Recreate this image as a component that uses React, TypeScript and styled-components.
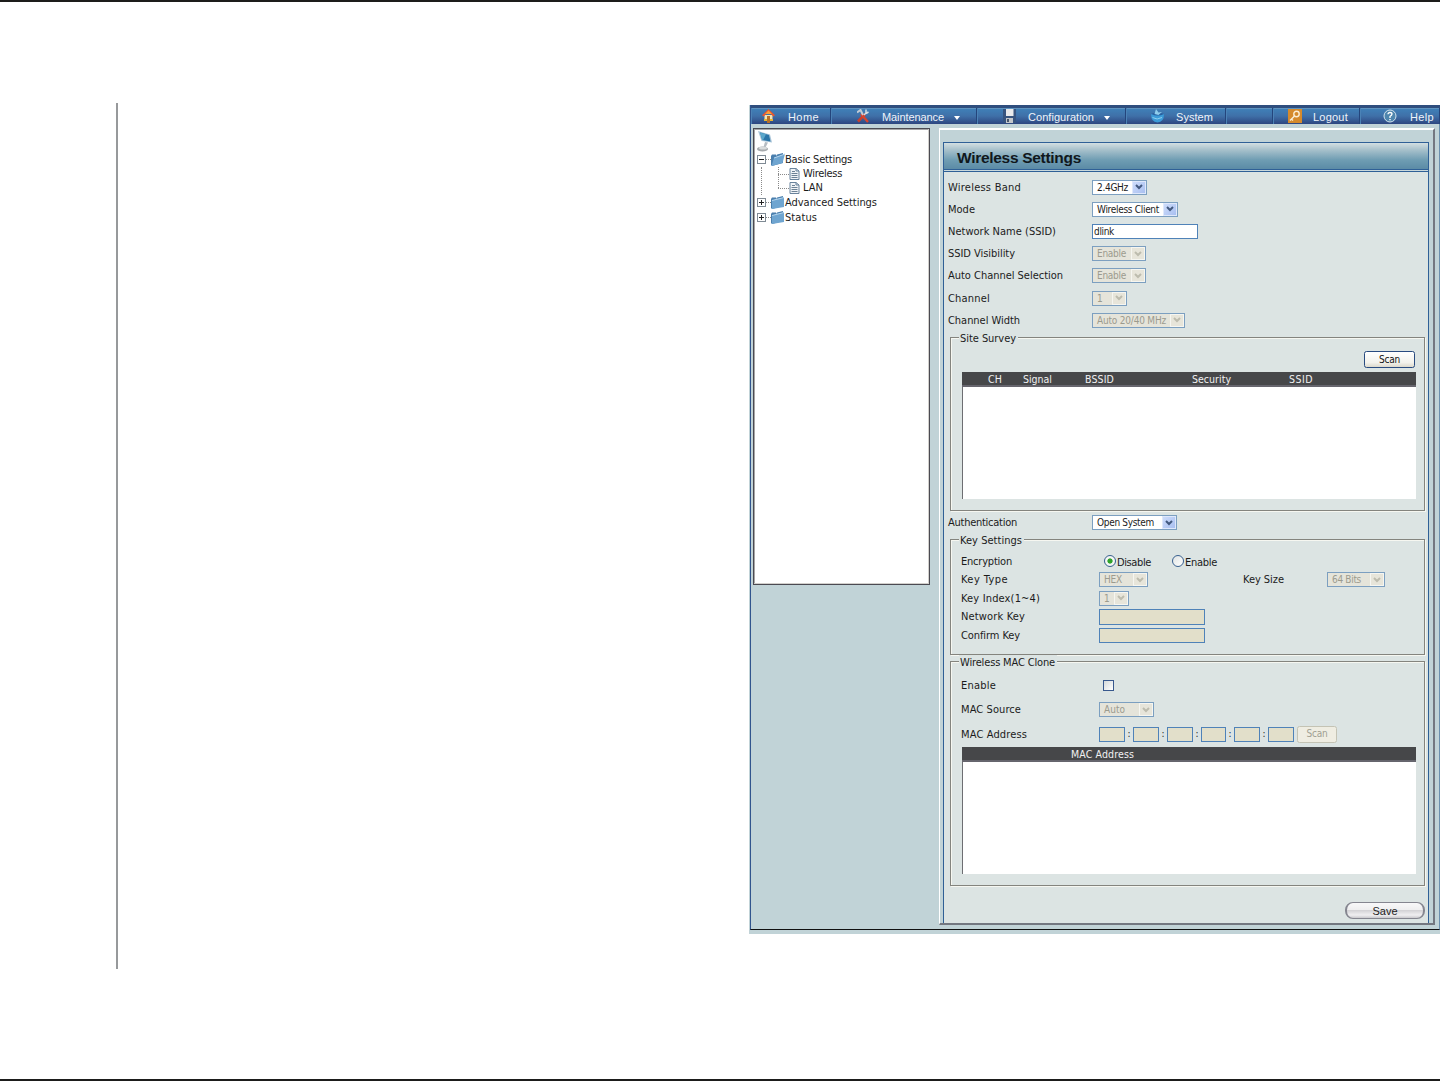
import React, { useLayoutEffect, useRef, useState } from "react";
import styled, { createGlobalStyle, css } from "styled-components";

const ui = `"DejaVu Sans Condensed", "DejaVu Sans", sans-serif`;
const arial = `"Liberation Sans", Arial, sans-serif`;

const Global = createGlobalStyle`
  * { box-sizing: border-box; }
  html, body { margin: 0; background: #fff; }
  body { font: 11px/14px ${ui}; color: #1b1b1b; overflow: hidden; }
`;

const Page = styled.div`
  width: 1440px;
  height: 1081px;
  border-top: 2px solid #1d1d1b;
  border-bottom: 2px solid #1d1d1b;
  display: flex;
  align-items: flex-start;
  overflow: hidden;
`;
const MarginRule = styled.div`
  width: 2px;
  height: 866px;
  margin: 101px 631px 0 116px;
  background: #97999b;
  flex: none;
`;
const Screen = styled.div`
  width: 691px;
  height: 829px;
  margin-top: 103px;
  background: #c1d3d7;
  flex: none;
  padding-left: 1px;
`;
const Frame = styled.div`
  height: 825px;
  border-left: 1px solid #31548d;
  border-right: 1px solid #6b8fae;
  border-bottom: 1px solid #111;
`;

const Nav = styled.nav`
  height: 19px;
  display: flex;
  border-top: 3px solid #2f4e7e;
  margin-right: -1px;
`;
const NavItem = styled.div<{ $w: number; $pad: number; $gap: number }>`
  width: ${(p) => p.$w}px;
  padding-left: ${(p) => p.$pad}px;
  height: 16px;
  display: flex;
  align-items: center;
  flex: none;
  color: #eef4fa;
  font: 11px/16px ${arial};
  background: linear-gradient(#6f9fc4 0, #3f7eb6 1.5px, #3f70a8 50%, #2d4680 100%);
  border-right: 1px solid #24457c;
  box-shadow: inset 1px 0 #4b82b6;
  & > svg { flex: none; margin-right: ${(p) => p.$gap}px; }
  & > span { padding-top: 2px; }
`;
const Caret = styled.i`
  border: 3.5px solid transparent;
  border-top: 4px solid #fff;
  border-bottom: 0;
  margin: 3px 0 0 10px;
`;

const Columns = styled.div`
  display: flex;
  align-items: flex-start;
  padding: 4px 0 0 2px;
`;
const TreePanel = styled.aside`
  width: 177px;
  height: 457px;
  background: #fff;
  border: 1px solid #4b4a52;
  box-shadow: inset -1px -1px #d2d0cc, inset 1px 1px #a6a6a6;
  padding: 2px 0 0 3px;
`;
const TreeRoot = styled.div`
  height: 21px;
`;
const TreeRow = styled.div`
  display: flex;
  align-items: center;
  height: 14.8px;
  font-size: 11px;
  & > svg { flex: none; }
  & > span:last-child { padding-top: 1px; }
`;
const Children = styled.div`
  margin-left: 4px;
  border-left: 1px dotted #8a8a8a;
  height: 28.4px;
`;
const ChildRow = styled.div<{ $last?: boolean }>`
  height: 14.2px;
  display: flex;
  align-items: center;
  margin-left: 16px;
  position: relative;
  &::before {
    content: "";
    align-self: flex-start;
    width: 11px;
    height: 7.5px;
    border-bottom: 1px dotted #8a8a8a;
    flex: none;
  }
  &::after {
    content: "";
    position: absolute;
    left: 0;
    top: 0;
    height: ${(p) => (p.$last ? 7 : 15)}px;
    border-left: 1px dotted #8a8a8a;
  }
  & > svg { margin-right: 3px; flex: none; }
`;
const Toggle = styled.span`
  width: 9px;
  height: 9px;
  border: 1px solid #7f8a94;
  background: #fff;
  display: grid;
  place-items: center;
  flex: none;
`;
const Dots = styled.span`
  width: 5px;
  border-top: 1px dotted #8a8a8a;
  margin-right: -1px;
  flex: none;
`;

const MainPanel = styled.main`
  width: 496px;
  height: 797px;
  margin-left: 9px;
  border: 2px solid #737780;
  border-top-color: #fff;
  border-left: 1px solid #fff;
  padding: 12px 4px 0 3px;
`;
const Inner = styled.div`
  height: 781px;
  border: 1px solid #2f6096;
  border-bottom: 0;
  background: #dce4e3;
`;
const Title = styled.h1`
  margin: 0;
  height: 29px;
  padding-left: 13px;
  font: bold 15.5px/29px ${arial};
  color: #10171c;
  background: linear-gradient(#d3dfe1 0, #a9c2cc 25%, #6f9db3 65%, #5b8ba6 100%);
  border-bottom: 3px double #2f6096;
`;
const Form = styled.section`
  height: 159px;
  padding: 4.2px 0 0 4px;
`;
const Row = styled.div<{ $h: number; $label: number }>`
  height: ${(p) => p.$h}px;
  display: grid;
  grid-template-columns: ${(p) => p.$label}px 1fr;
  align-items: center;
  & > span:first-child { padding-top: 1px; }
`;
const AuthRow = styled.div`
  height: 21px;
  padding-left: 4px;
`;
const Cells = styled.div`
  display: flex;
  align-items: center;
`;
const ScanSlot = styled.div`
  margin: 0 0 4px 403px;
`;
const RadioCells = styled.div`
  display: flex;
  align-items: center;
  padding-left: 5px;
  & > span:not(:empty) { padding-top: 3px; }
`;
const RadioGap = styled.span`
  width: 21px;
`;
const SizeLabel = styled.span`
  width: 179px;
  padding: 1px 0 0 95px;
`;
const SideButton = styled.span`
  margin-left: 3px;
`;
const Group = styled.fieldset<{ $h: number; $lift?: number }>`
  width: 475px;
  height: ${(p) => p.$h - 1}px;
  margin: ${(p) => -(p.$lift ?? 0)}px 0 1px 6px;
  padding: 0 10px;
  border: 1px solid #84847e;
  box-shadow: 1px 1px #f6f7f1, inset 1px 1px #f6f7f1;
  min-width: 0;
`;
const Legend = styled.legend`
  height: 12px;
  line-height: 15px;
  margin: 0 0 0 -2px;
  padding: 0 2px 0 1px;
  background: #dce4e3;
`;
const GroupBody = styled.div<{ $top: number }>`
  padding-top: ${(p) => p.$top}px;
`;

const off = css`
  color: #9c9b8e;
  background: #e5e4da;
`;
const SelectBox = styled.span<{ $w: number; $off?: boolean }>`
  width: ${(p) => p.$w}px;
  height: 15px;
  display: inline-flex;
  align-items: center;
  justify-content: space-between;
  padding: 0 1px 0 4px;
  border: 1px solid #7c9fc0;
  background: #fff;
  font-size: 10px;
  line-height: 13px;
  flex: none;
  ${(p) => p.$off && off}
`;
const Arrow = styled.span<{ $off?: boolean }>`
  width: 14px;
  height: 13px;
  margin: -1px -1px -1px 0;
  border: 1px solid ${(p) => (p.$off ? "#f6f6f1" : "#dfe8fb")};
  background: ${(p) => (p.$off ? "#e7e5da" : "linear-gradient(135deg, #cddcfb, #a9bff0)")};
  display: grid;
  place-items: center;
  flex: none;
`;
const Input = styled.span<{ $w: number; $off?: boolean; $h?: number }>`
  width: ${(p) => p.$w}px;
  height: ${(p) => p.$h ?? 15}px;
  border: 1px solid #4f82b8;
  background: ${(p) => (p.$off ? "#e2dfca" : "#fff")};
  padding-left: 1px;
  font-size: 10px;
  line-height: 14px;
  flex: none;
`;
const Colon = styled.span<{ $w: number }>`
  width: ${(p) => p.$w}px;
  text-align: center;
  font-size: 10px;
  flex: none;
`;
const Radio = styled.span<{ $on?: boolean }>`
  width: 12px;
  height: 12px;
  border-radius: 50%;
  border: 1px solid #38608f;
  background: ${(p) =>
    p.$on ? "radial-gradient(circle, #2fa32b 0 2.2px, #f4f6f4 3px)" : "linear-gradient(135deg, #dfe3e3, #fff)"};
  margin-right: 1px;
  flex: none;
`;
const Check = styled.span`
  width: 11px;
  height: 11px;
  margin-left: 4px;
  border: 1px solid #38588d;
  background: linear-gradient(135deg, #d5d9da, #fff);
`;
const Button = styled.button<{ $w: number; $off?: boolean }>`
  width: ${(p) => p.$w}px;
  height: 17px;
  padding: 0;
  display: block;
  border: 1px solid ${(p) => (p.$off ? "#c4c3b4" : "#294b80")};
  border-radius: 2.5px;
  background: ${(p) => (p.$off ? "#efede2" : "linear-gradient(#fff, #f3f2ec 70%, #dcd8cb)")};
  color: ${(p) => (p.$off ? "#a09f92" : "#111")};
  font: 10px/14px ${ui};
  flex: none;
`;
const Table = styled.div<{ $h: number }>`
  width: 454px;
  height: ${(p) => p.$h}px;
  background: #fff;
  margin-left: 1px;
  border-left: 1px solid #6d6e72;
`;
const TableHead = styled.div<{ $cols: string }>`
  height: 15px;
  margin-left: -1px;
  display: grid;
  grid-template-columns: ${(p) => p.$cols};
  background: #464749;
  border-bottom: 2px solid #66656d;
  color: #f1f1f1;
  font-size: 10.5px;
  line-height: 14px;
`;
const SaveButton = styled.button`
  display: block;
  width: 80px;
  height: 17px;
  margin: 16px 0 0 401px;
  padding: 0;
  border: 1px solid #858690;
  border-left-width: 2px;
  border-right-width: 2px;
  border-radius: 8px;
  background: linear-gradient(#f8f8f9 0, #efeff0 45%, #d4d3d6 50%, #f0eff1 80%, #c9c8cc 100%);
  color: #222;
  font: 11px/16px ${arial};
`;
const Txt = styled.span`
  display: inline-block;
  justify-self: start;
  white-space: pre;
  flex: none;
`;

/** Single-line text tracked out to a given width. */
function Fit({ w, children }: { w: number; children: string }) {
  const ref = useRef<HTMLSpanElement>(null);
  const [gap, setGap] = useState(0);
  useLayoutEffect(() => {
    const natural = ref.current!.getBoundingClientRect().width;
    setGap((w - natural) / children.length);
  }, [w, children]);
  return (
    <Txt ref={ref} style={{ letterSpacing: gap }}>
      {children}
    </Txt>
  );
}

function Select({ w, tw, disabled, children }: { w: number; tw: number; disabled?: boolean; children: string }) {
  return (
    <SelectBox $w={w} $off={disabled}>
      <Fit w={tw}>{children}</Fit>
      <Arrow $off={disabled}>
        <svg width="8" height="6" viewBox="0 0 8 6">
          <path d="M1 1l3 3 3-3" fill="none" stroke={disabled ? "#bdbcae" : "#43597f"} strokeWidth="2" />
        </svg>
      </Arrow>
    </SelectBox>
  );
}

const HomeIcon = () => (
  <svg width="13" height="14" viewBox="0 0 13 14">
    <path d="M2.500 6h8v5h-8z" fill="#f4e3b5" />
    <path d="M6.500 0L13 6.300 11.500 7.500 6.500 3 1.500 7.500 0 6.300z" fill="#e8552f" />
    <path d="M6.500 1.500L10 5H3z" fill="#f6a03c" />
    <path d="M5 7h3v7H5z" fill="#b7702a" />
    <path d="M2 10h3v2H2zM8 10h3v2H8z" fill="#e9b532" />
  </svg>
);
const ToolsIcon = () => (
  <svg width="12" height="14" viewBox="0 0 12 14">
    <path d="M8 5L1 12.500" stroke="#c9402e" strokeWidth="2.600" />
    <path d="M4 5l7 8" stroke="#d8442e" strokeWidth="2.400" />
    <path d="M0 3.500L3.500 1 6 6" stroke="#c3ccd5" strokeWidth="2" fill="none" />
    <path d="M7 6l2-2V.5M11.500 3L9 4.500" stroke="#d5dde4" strokeWidth="1.500" fill="none" />
  </svg>
);
const FloppyIcon = () => (
  <svg width="13" height="14" viewBox="0 0 13 14">
    <path d="M0 0h13v14H1.500L0 12.500z" fill="#37547f" />
    <path d="M3 0h7.500v7H3z" fill="#e9eaec" />
    <path d="M3 9h7v5H3z" fill="#c4c7cb" />
    <path d="M4 10h2v3H4z" fill="#47566c" />
  </svg>
);
const SystemIcon = () => (
  <svg width="15" height="14" viewBox="0 0 15 14">
    <path d="M1 5h13q0 8-6.500 8.500Q1 13 1 5z" fill="#3c9bd8" />
    <path d="M1 5q6-2.500 13 0-6 3-13 0z" fill="#275f9f" />
    <path d="M6 0l2.500 3.500L12 3 8.500 6 4.500 5z" fill="#8fcdec" />
    <path d="M2.500 8.500q4.500 3 9.500 0" stroke="#8fd0f0" fill="none" />
  </svg>
);
const KeyIcon = () => (
  <svg width="14" height="14" viewBox="0 0 14 14">
    <rect width="14" height="14" fill="#d58a2c" />
    <circle cx="8.500" cy="5" r="2.700" fill="none" stroke="#fbeed6" strokeWidth="1.400" />
    <path d="M6.500 7L2 11.500M3.500 10l1.500 1.500" stroke="#fbeed6" strokeWidth="1.400" />
  </svg>
);
const HelpIcon = () => (
  <svg width="14" height="14" viewBox="0 0 14 14">
    <circle cx="7" cy="7" r="6" fill="#4f86ae" stroke="#d4e4ee" strokeWidth="1" />
    <path d="M5 5.300q0-1.800 2-1.800t2 1.600q0 1-2 2.400V9" fill="none" stroke="#fff" strokeWidth="1.300" />
    <path d="M6.300 10h1.400v1.300H6.300z" fill="#fff" />
  </svg>
);
const MonitorIcon = () => (
  <svg width="17" height="21" viewBox="0 0 17 21">
    <path d="M1 0l12 3.500 2 8L4.500 10z" fill="#a8c4d8" />
    <path d="M3 1.500l9 2.500 1.500 6.500L5.200 9z" fill="#2a75a8" />
    <path d="M3 1.500l6 1.700L6 9.200l-.8-.2z" fill="#5aa7cb" />
    <path d="M8 11l3 .5-2.500 5-2-.5z" fill="#b5bcc2" />
    <ellipse cx="5.500" cy="18" rx="5.500" ry="2.500" fill="#a6aaad" />
    <ellipse cx="6" cy="17" rx="4" ry="1.500" fill="#d9dcdd" />
  </svg>
);
const FolderIcon = ({ open }: { open?: boolean }) => (
  <svg width="15" height="13" viewBox="0 0 15 13">
    <path d="M1 3l1-1.500h4L7 3V1.500L13 0v10L2 13l-1-1z" fill="#4a7fae" />
    <path d={open ? "M4 5l11-4-2.500 9L1.500 13z" : "M2 4.500L14 1.500V11L2 13z"} fill="#6fa5d0" />
    <path d={open ? "M4 5l11-4" : "M2 4.500L14 1.500"} stroke="#b8d7ee" />
  </svg>
);
const DocIcon = () => (
  <svg width="11" height="12" viewBox="0 0 11 12">
    <path d="M1 .5h6L10 3v8.500H1z" fill="#f1f4f7" stroke="#69839c" />
    <path d="M3 3.500h3M2.500 5.500h6M2.500 7.500h6M2.500 9.500h6" stroke="#6d8295" />
    <path d="M7 .5V3h3" fill="none" stroke="#69839c" />
  </svg>
);
const Sign = ({ plus }: { plus?: boolean }) => (
  <Toggle>
    <svg width="5" height="5" viewBox="0 0 5 5">
      <path d={plus ? "M0 2h5v1H0zM2 0h1v5H2z" : "M0 2h5v1H0z"} fill="#222" />
    </svg>
  </Toggle>
);

const fields = [
  { label: "Wireless Band", lw: 73, value: "2.4GHz", w: 55, tw: 31 },
  { label: "Mode", lw: 27, value: "Wireless Client", w: 86, tw: 62 },
  { label: "Network Name (SSID)", lw: 108, value: "dlink", w: 106, tw: 20, input: true },
  { label: "SSID Visibility", lw: 67, value: "Enable", w: 54, tw: 29, off: true },
  { label: "Auto Channel Selection", lw: 115, value: "Enable", w: 54, tw: 29, off: true },
  { label: "Channel", lw: 42, value: "1", w: 35, tw: 6, off: true },
  { label: "Channel Width", lw: 72, value: "Auto 20/40 MHz", w: 93, tw: 69, off: true },
];

const octets = [26, 26, 26, 25, 26, 26];

export default function App() {
  return (
    <>
      <Global />
      <Page>
        <MarginRule />
        <Screen>
          <Frame>
            <Nav>
              <NavItem $w={80} $pad={11} $gap={13}><HomeIcon /><Fit w={31}>Home</Fit></NavItem>
              <NavItem $w={146} $pad={26} $gap={13}><ToolsIcon /><Fit w={62}>Maintenance</Fit><Caret /></NavItem>
              <NavItem $w={149} $pad={26} $gap={12}><FloppyIcon /><Fit w={66}>Configuration</Fit><Caret /></NavItem>
              <NavItem $w={100} $pad={24} $gap={11}><SystemIcon /><Fit w={37}>System</Fit></NavItem>
              <NavItem $w={47} $pad={0} $gap={0} />
              <NavItem $w={87} $pad={15} $gap={11}><KeyIcon /><Fit w={35}>Logout</Fit></NavItem>
              <NavItem $w={80} $pad={23} $gap={13}><HelpIcon /><Fit w={24}>Help</Fit></NavItem>
            </Nav>
            <Columns>
              <TreePanel>
                <TreeRoot><MonitorIcon /></TreeRoot>
                <TreeRow><Sign /><Dots /><FolderIcon open /><Fit w={67}>Basic Settings</Fit></TreeRow>
                <Children>
                  <ChildRow><DocIcon /><Fit w={39}>Wireless</Fit></ChildRow>
                  <ChildRow $last><DocIcon /><Fit w={20}>LAN</Fit></ChildRow>
                </Children>
                <TreeRow><Sign plus /><Dots /><FolderIcon /><Fit w={92}>Advanced Settings</Fit></TreeRow>
                <TreeRow><Sign plus /><Dots /><FolderIcon /><Fit w={32}>Status</Fit></TreeRow>
              </TreePanel>
              <MainPanel>
                <Inner>
                  <Title><Fit w={124}>Wireless Settings</Fit></Title>
                  <Form>
                    {fields.map((f) => (
                      <Row key={f.label} $h={22.16} $label={144}>
                        <Fit w={f.lw}>{f.label}</Fit>
                        {f.input ? (
                          <Input $w={f.w}><Fit w={f.tw}>{f.value}</Fit></Input>
                        ) : (
                          <Select w={f.w} tw={f.tw} disabled={f.off}>{f.value}</Select>
                        )}
                      </Row>
                    ))}
                  </Form>
                  <Group $h={181}>
                    <Legend><Fit w={56}>Site Survey</Fit></Legend>
                    <GroupBody $top={8}>
                      <ScanSlot><Button $w={51}><Fit w={21}>Scan</Fit></Button></ScanSlot>
                      <Table $h={127}>
                        <TableHead $cols="26px 35px 62px 107px 97px 1fr">
                          <span />
                          <Fit w={14}>CH</Fit>
                          <Fit w={29}>Signal</Fit>
                          <Fit w={29}>BSSID</Fit>
                          <Fit w={39}>Security</Fit>
                          <Fit w={24}>SSID</Fit>
                        </TableHead>
                      </Table>
                    </GroupBody>
                  </Group>
                  <AuthRow>
                    <Row $h={21} $label={144}>
                      <Fit w={69}>Authentication</Fit>
                      <Select w={85} tw={57}>Open System</Select>
                    </Row>
                  </AuthRow>
                  <Group $h={123}>
                    <Legend><Fit w={62}>Key Settings</Fit></Legend>
                    <GroupBody $top={6.7}>
                      <Row $h={18.65} $label={138}>
                        <Fit w={51}>Encryption</Fit>
                        <RadioCells>
                          <Radio $on /><Fit w={34}>Disable</Fit>
                          <RadioGap />
                          <Radio /><Fit w={32}>Enable</Fit>
                        </RadioCells>
                      </Row>
                      <Row $h={18.65} $label={138}>
                        <Fit w={47}>Key Type</Fit>
                        <Cells>
                          <Select w={49} tw={18} disabled>HEX</Select>
                          <SizeLabel><Fit w={41}>Key Size</Fit></SizeLabel>
                          <Select w={58} tw={29} disabled>64 Bits</Select>
                        </Cells>
                      </Row>
                      <Row $h={18.65} $label={138}>
                        <Fit w={79}>Key Index(1~4)</Fit>
                        <Select w={30} tw={6} disabled>1</Select>
                      </Row>
                      <Row $h={18.65} $label={138}>
                        <Fit w={64}>Network Key</Fit>
                        <Input $w={106} $off $h={16} />
                      </Row>
                      <Row $h={18.65} $label={138}>
                        <Fit w={59}>Confirm Key</Fit>
                        <Input $w={106} $off />
                      </Row>
                    </GroupBody>
                  </Group>
                  <Group $h={232} $lift={1}>
                    <Legend><Fit w={95}>Wireless MAC Clone</Fit></Legend>
                    <GroupBody $top={6.5}>
                      <Row $h={24} $label={138}>
                        <Fit w={35}>Enable</Fit>
                        <Check />
                      </Row>
                      <Row $h={24} $label={138}>
                        <Fit w={60}>MAC Source</Fit>
                        <Select w={55} tw={21} disabled>Auto</Select>
                      </Row>
                      <Row $h={25.5} $label={138}>
                        <Fit w={66}>MAC Address</Fit>
                        <Cells>
                          {octets.map((w, i) => (
                            <React.Fragment key={i}>
                              {i > 0 && <Colon $w={8}>:</Colon>}
                              <Input $w={w} $off />
                            </React.Fragment>
                          ))}
                          <SideButton><Button $w={40} $off><Fit w={21}>Scan</Fit></Button></SideButton>
                        </Cells>
                      </Row>
                      <Table $h={127}>
                        <TableHead $cols="109px 1fr">
                          <span />
                          <Fit w={63}>MAC Address</Fit>
                        </TableHead>
                      </Table>
                    </GroupBody>
                  </Group>
                  <SaveButton><Fit w={25}>Save</Fit></SaveButton>
                </Inner>
              </MainPanel>
            </Columns>
          </Frame>
        </Screen>
      </Page>
    </>
  );
}
